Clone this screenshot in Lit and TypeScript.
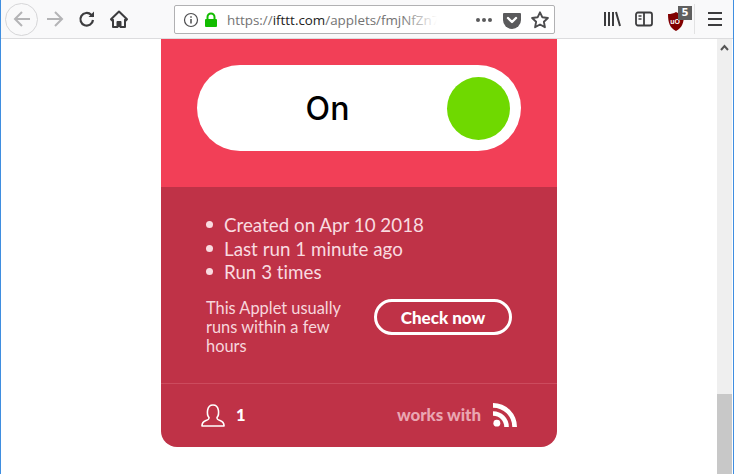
import { LitElement, html, css } from "lit";
import { customElement } from "lit/decorators.js";

@customElement("app-root")
export class AppRoot extends LitElement {
  static styles = css`
    :host { display: block; width: 734px; height: 474px; overflow: hidden; font-family: Lato, "Liberation Sans", sans-serif; font-variant-ligatures: none; background: #fff; }
    * { box-sizing: border-box; }
    .window { width: 734px; height: 474px; border-left: 1px solid #3f8ee0; border-right: 1px solid #3f8ee0; display: flex; flex-direction: column; }
    .toolbar { height: 39px; flex: none; background: #f9f9fa; border-bottom: 1px solid #dcdcde; display: flex; align-items: center; position: relative; }
    .back { width: 33px; height: 33px; margin-left: 4px; border-radius: 50%; border: 1px solid #d6d6d8; background: #f9f9fa; display: flex; align-items: center; justify-content: center; flex: none; }
    .tb { width: 20px; height: 20px; flex: none; display: block; }
    .fwd { margin-left: 7px; }
    .reload { margin-left: 12px; }
    .home { margin-left: 12px; }
    .url { margin-left: 45px; width: 381px; height: 29px; background: #fff; border: 1px solid #b1b1b3; border-radius: 2px; display: flex; align-items: center; padding-left: 8px; flex: none; margin-top: 1px; }
    .urltext { margin-left: 9px; font: 13.4px "Open Sans", sans-serif; color: #737373; width: 214px; white-space: nowrap; position: relative; }
    .urltext b { font-weight: 400; color: #222; }
    .fade { position: absolute; right: 0; top: 0; bottom: 0; width: 40px; background: linear-gradient(to right, rgba(255,255,255,0), #fff 90%); }
    .dots { margin-left: 33px; }
    .pocket { margin-left: 8px; }
    .star { margin-left: 8px; }
    .lib { margin-left: 47px; }
    .side { margin-left: 12px; }
    .ublock { margin-left: 14px; position: relative; width: 24px; height: 24px; flex: none; }
    .badge { position: absolute; left: 10px; top: -1px; width: 14px; height: 14px; background: #5f5f5f; color: #fff; font: bold 10px "DejaVu Sans", sans-serif; text-align: center; line-height: 13px; }
    .shield { position: absolute; left: 0; top: 5px; display: block; }
    .sep { width: 1px; height: 30px; background: #e2e2e3; margin-left: 2px; flex: none; }
    .menu { margin-left: 10px; }
    .main { flex: 1; display: flex; min-height: 0; }
    .page { flex: 1; display: flex; justify-content: center; }
    .card { width: 396px; height: 408px; border-radius: 0 0 16px 16px; overflow: hidden; display: flex; flex-direction: column; flex: none; }
    .top { height: 148px; background: #f23f57; padding: 26px 36px 0; flex: none; }
    .pill { width: 324px; height: 86px; border-radius: 43px; background: #fff; display: flex; align-items: center; padding: 0 11px 0 0; }
    .on { flex: 1; text-align: center; font-family: Inter, sans-serif; font-size: 32px; font-weight: 500; color: #000; margin-left: 11px; }
    .dot { width: 63px; height: 63px; border-radius: 50%; background: #6fd900; flex: none; }
    .info { flex: 1; background: #bf3247; display: flex; flex-direction: column; }
    .details { height: 197px; padding: 26px 45px 0; border-bottom: 1px solid #cc4b5e; flex: none; }
    ul { list-style: none; margin: 0; padding: 0; }
    li { font-size: 18.8px; line-height: 23.5px; color: #f9dbe0; display: flex; align-items: center; }
    li::before { content: ""; width: 7px; height: 7px; border-radius: 50%; background: #f9dbe0; margin-right: 11px; flex: none; }
    .row { display: flex; align-items: center; justify-content: space-between; margin-top: 14.5px; width: 306px; }
    .note { width: 145px; font-size: 16.4px; line-height: 19px; color: #f7d6dc; }
    .btn { width: 138px; height: 36px; border: 3px solid #fff; border-radius: 18px; color: #fff; font-size: 17px; font-weight: 900; display: flex; align-items: center; justify-content: center; margin-top: -19px; }
    .foot { flex: 1; display: flex; align-items: center; padding: 0 40px 1px 40px; }
    .count { color: #fff; font-weight: 900; font-size: 16.5px; margin-left: 11px; margin-bottom: 1px; }
    .works { margin-left: auto; color: #eaa6b2; font-weight: 900; font-size: 16.9px; margin-bottom: 1px; }
    .rss { margin-left: 12px; display: block; }
    .scroll { width: 15px; background: #efefef; display: flex; flex-direction: column; justify-content: space-between; align-items: center; flex: none; margin-right: 1px; }
    .arrow { margin-top: 5px; display: block; }
    .thumb { width: 15px; height: 80px; background: #c8c8c8; }
  `;

  render() {
    return html`<div class="window">
      <div class="toolbar">
        <div class="back">
          <svg class="tb" viewBox="0 0 20 20" fill="none" stroke="#b4b4b6" stroke-width="2"><path d="M18 10H3M10 3l-7 7 7 7"/></svg>
        </div>
        <svg class="tb fwd" viewBox="0 0 20 20" fill="none" stroke="#b4b4b6" stroke-width="2"><path d="M2 10h15M10 3l7 7-7 7"/></svg>
        <svg class="tb reload" viewBox="0 0 20 20" fill="none" stroke="#3c3c3e" stroke-width="2.2"><path d="M16 11a6.300 6.300 0 1 1-1.800-5.200L16 7.500"/><path d="M17 2.500V8h-5.500z" fill="#3c3c3e" stroke="none"/></svg>
        <svg class="tb home" viewBox="0 0 20 20"><path d="M10 2.500 2 10.300l1.200 1.200L4 10.800V18h4.500v-5h3v5H16v-7.200l.8.700 1.200-1.200z" fill="none" stroke="#3c3c3e" stroke-width="2" stroke-linejoin="round"/><rect x="8" y="12" width="4" height="6" fill="#3c3c3e"/></svg>
        <div class="url">
          <svg width="16" height="16" viewBox="0 0 16 16" style="flex:none" fill="none" stroke="#4c4c4e" stroke-width="1.2"><circle cx="8" cy="8" r="6.500"/><path d="M8 7v4.500M8 4.200v1.500" stroke-width="1.500"/></svg>
          <svg width="14" height="16" viewBox="0 0 14 16" style="flex:none;margin-left:5px"><path d="M3.500 7V5a3.500 3.500 0 0 1 7 0v2" fill="none" stroke="#12bc00" stroke-width="2"/><rect x="1" y="7" width="12" height="8" rx="1" fill="#12bc00"/></svg>
          <div class="urltext">https://<b>ifttt.com</b>/applets/fmjNfZn7<span class="fade"></span></div>
          <svg class="tb dots" viewBox="0 0 20 20" fill="#5a5a5c"><circle cx="4" cy="10" r="2"/><circle cx="10" cy="10" r="2"/><circle cx="16" cy="10" r="2"/></svg>
          <svg class="tb pocket" viewBox="0 0 20 20"><path d="M2 3h16a1 1 0 0 1 1 1v6a9 9 0 0 1-18 0V4a1 1 0 0 1 1-1z" fill="#5a5a5c"/><path d="M6 8l4 4 4-4" fill="none" stroke="#fff" stroke-width="2.400" stroke-linecap="round" stroke-linejoin="round"/></svg>
          <svg class="tb star" viewBox="0 0 20 20"><path d="M10 2.300l2.400 5 5.500.7-4 3.800 1 5.400-4.900-2.700-4.900 2.700 1-5.400-4-3.800 5.500-.7z" fill="none" stroke="#4c4c4e" stroke-width="1.900" stroke-linejoin="round"/></svg>
        </div>
        <svg class="tb lib" viewBox="0 0 20 20" stroke="#3c3c3e" stroke-width="2" fill="none"><path d="M3 3v14M7 3v14M11 3v14M14 3l4 14"/></svg>
        <svg class="tb side" viewBox="0 0 20 20" fill="none" stroke="#3c3c3e" stroke-width="1.800"><rect x="2" y="3.500" width="16" height="13" rx="2"/><path d="M10 3.500v13"/><path d="M4.500 7h3M4.500 10h3" stroke-width="1.300"/></svg>
        <div class="ublock">
          <svg class="shield" width="16" height="19" viewBox="0 0 16 19"><path d="M8 0c2.500 1.500 5 2 8 2 0 9-2 14-8 17C2 16 0 11 0 2c3 0 5.500-.5 8-2z" fill="#800000"/><text x="7" y="12" font-size="7" font-weight="700" fill="#fff" text-anchor="middle" font-family="Liberation Sans, sans-serif">uO</text></svg>
          <div class="badge">5</div>
        </div>
        <div class="sep"></div>
        <svg class="tb menu" viewBox="0 0 20 20" stroke="#3c3c3e" stroke-width="2"><path d="M3 4h14M3 10h14M3 16h14"/></svg>
      </div>
      <div class="main">
        <div class="page">
          <div class="card">
            <div class="top"><div class="pill"><div class="on">On</div><div class="dot"></div></div></div>
            <div class="info">
              <div class="details">
                <ul>
                  <li>Created on Apr 10 2018</li>
                  <li>Last run 1 minute ago</li>
                  <li>Run 3 times</li>
                </ul>
                <div class="row">
                  <div class="note">This Applet usually runs within a few hours</div>
                  <div class="btn">Check now</div>
                </div>
              </div>
              <div class="foot">
                <svg width="24" height="24" viewBox="0 0 24 24" fill="none" stroke="#fff" stroke-width="1.600" stroke-linejoin="round"><path d="M8 14.500C5.500 11.500 5.500 2 12 2s6.500 9.500 4 12.500c0 1.500 0 2 3 3 2.500 1 4 2 4 5v.5H1v-.5c0-3 1.500-4 4-5 3-1 3-1.500 3-3z"/></svg>
                <span class="count">1</span>
                <span class="works">works with</span>
                <svg class="rss" width="24" height="24" viewBox="0 0 25 25" fill="#fff"><circle cx="4" cy="21" r="3.600"/><path d="M0 8.500v4.800A11.700 11.700 0 0 1 11.700 25h4.800A16.500 16.500 0 0 0 0 8.500z"/><path d="M0 0v4.900A20.100 20.100 0 0 1 20.100 25H25A25 25 0 0 0 0 0z"/></svg>
              </div>
            </div>
          </div>
        </div>
        <div class="scroll">
          <svg class="arrow" width="9" height="7" viewBox="0 0 9 7" fill="none" stroke="#555" stroke-width="2"><path d="M1 6l3.500-4L8 6"/></svg>
          <div class="thumb"></div>
        </div>
      </div>
    </div>`;
  }
}
